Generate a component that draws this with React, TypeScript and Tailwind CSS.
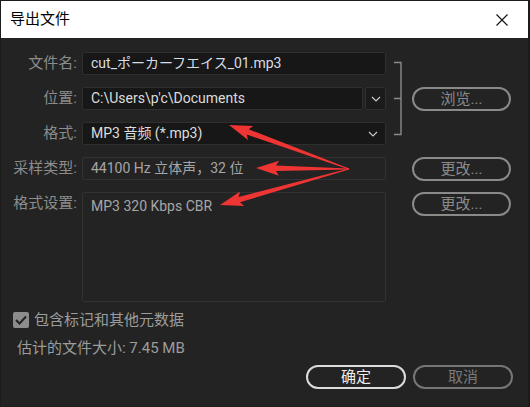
import React from 'react';

const FONT = 'Roboto, "Noto Sans CJK SC", sans-serif';

// tapered annotation arrow: thin tail at (sx,sy), barbed head at (tx,ty)
const arrowPoints = (sx: number, sy: number, tx: number, ty: number) => {
  const dx = tx - sx;
  const dy = ty - sy;
  const len = Math.hypot(dx, dy);
  const ux = dx / len;
  const uy = dy / len;
  const nx = -uy;
  const ny = ux;
  const head = 20;
  const hx = tx - ux * head;
  const hy = ty - uy * head;
  const bx = tx - ux * (head + 3);
  const by = ty - uy * (head + 3);
  const pts = [
    [sx + nx * 0.4, sy + ny * 0.4],
    [hx + nx * 2.8, hy + ny * 2.8],
    [bx + nx * 7.5, by + ny * 7.5],
    [tx, ty],
    [bx - nx * 7.5, by - ny * 7.5],
    [hx - nx * 2.8, hy - ny * 2.8],
    [sx - nx * 0.4, sy - ny * 0.4],
  ];
  return pts.map(p => `${p[0].toFixed(1)},${p[1].toFixed(1)}`).join(' ');
};

const Chevron = () => (
  <svg width="10" height="6" viewBox="0 0 10 6" fill="none">
    <path d="M1 1 L5 5 L9 1" stroke="#c8c8c8" strokeWidth="1.2" />
  </svg>
);

const PillButton = ({ label, className = '' }: { label: string; className?: string }) => (
  <div
    className={`h-[24px] rounded-full border-2 flex items-center justify-center text-[15px] ${className}`}
  >
    {label}
  </div>
);

export default function App() {
  return (
    <div
      className="relative w-[530px] h-[407px] bg-[#232323] overflow-hidden border-t border-l border-r-2 border-b border-[#1c1c1c]"
      style={{ fontFamily: FONT }}
    >
      {/* Title bar */}
      <div className="h-[37px] bg-white flex items-center justify-between pl-[9px] pr-[20px]">
        <span className="text-[15px] text-black">导出文件</span>
        <svg width="12" height="12" viewBox="0 0 12 12">
          <path d="M0.5 0.5 L11.5 11.5 M11.5 0.5 L0.5 11.5" stroke="#111" strokeWidth="1.1" />
        </svg>
      </div>

      {/* Form */}
      <div className="pt-[14px] grid grid-cols-[81px_304px_26px_99px] grid-rows-[23px_23px_23px_23px_110px] gap-y-[12px] text-[14px]">
        <div className="pr-[5px] text-right text-[#8c8c8c] text-[15px] leading-[23px]">文件名:</div>
        <div className="bg-[#171717] border border-[#2f2f2f] rounded-[2px] pl-[8px] leading-[21px] text-[#d6dde4] whitespace-nowrap overflow-hidden">
          cut_ポーカーフエイス_01.mp3
        </div>
        <div className="row-span-3 relative">
          <svg width="26" height="94" viewBox="0 0 26 94" className="absolute left-0 top-0">
            <path d="M8 10.5 H15 V82.5 H8 M8 46.5 H15" stroke="#8a8a8a" strokeWidth="1.4" fill="none" />
          </svg>
        </div>
        <div />

        <div className="pr-[5px] text-right text-[#8c8c8c] text-[15px] leading-[23px]">位置:</div>
        <div className="flex gap-[2px]">
          <div className="flex-1 bg-[#171717] border border-[#2f2f2f] rounded-[2px] pl-[8px] leading-[21px] text-[#dcdcdc]">
            C:\Users\p'c\Documents
          </div>
          <div className="w-[21px] bg-[#1b1b1b] border border-[#2f2f2f] rounded-[2px] flex items-center justify-center">
            <Chevron />
          </div>
        </div>
        <PillButton label="浏览..." className="border-[#8a8a8a] text-[#8a8a8a]" />

        <div className="pr-[5px] text-right text-[#8c8c8c] text-[15px] leading-[23px]">格式:</div>
        <div className="bg-[#171717] border border-[#2f2f2f] rounded-[2px] pl-[8px] pr-[7px] flex items-center justify-between text-[#dcdcdc]">
          <span>MP3 音频 (*.mp3)</span>
          <Chevron />
        </div>
        <div />

        <div className="pr-[5px] text-right text-[#8c8c8c] text-[15px] leading-[23px]">采样类型:</div>
        <div className="border border-[#323232] rounded-[2px] pl-[8px] leading-[21px] text-[#a6a6a6]">
          44100 Hz 立体声，32 位
        </div>
        <div />
        <PillButton label="更改..." className="border-[#8a8a8a] text-[#8a8a8a]" />

        <div className="pr-[5px] text-right text-[#8c8c8c] text-[15px] leading-[23px]">格式设置:</div>
        <div className="border border-[#323232] rounded-[2px] pl-[8px] pt-[3px] text-[#a6a6a6]">
          MP3 320 Kbps CBR
        </div>
        <div />
        <div className="self-start">
          <PillButton label="更改..." className="border-[#8a8a8a] text-[#8a8a8a]" />
        </div>
      </div>

      {/* Options */}
      <div className="mt-[10px] h-[16px] pl-[12px] flex items-center gap-[5px] text-[15px] text-[#9c9c9c]">
        <div className="w-[16px] h-[16px] rounded-[2px] bg-[#8c8c8c] flex items-center justify-center">
          <svg width="12" height="10" viewBox="0 0 12 10" fill="none">
            <path d="M1 5 L4.5 8.5 L11 1.5" stroke="#222" strokeWidth="2" />
          </svg>
        </div>
        <span>包含标记和其他元数据</span>
      </div>
      <div className="mt-[10px] pl-[16px] text-[15px] text-[#9c9c9c] leading-[20px]">
        估计的文件大小: 7.45 MB
      </div>

      {/* Footer buttons */}
      <div className="mt-[7px] flex justify-end gap-[7px] pr-[15px]">
        <PillButton label="确定" className="w-[100px] border-[#dcdcdc] text-[#eeeeee]" />
        <PillButton label="取消" className="w-[100px] border-[#767676] text-[#7a7a7a]" />
      </div>

      {/* Red annotation arrows */}
      <svg className="absolute left-0 top-0 pointer-events-none" width="530" height="407" viewBox="0 0 530 407">
        <polygon points={arrowPoints(348, 168, 228, 124)} fill="#ef3434" />
        <polygon points={arrowPoints(348, 168, 255, 167)} fill="#ef3434" />
        <polygon points={arrowPoints(348, 168, 219, 204)} fill="#ef3434" />
      </svg>
    </div>
  );
}
